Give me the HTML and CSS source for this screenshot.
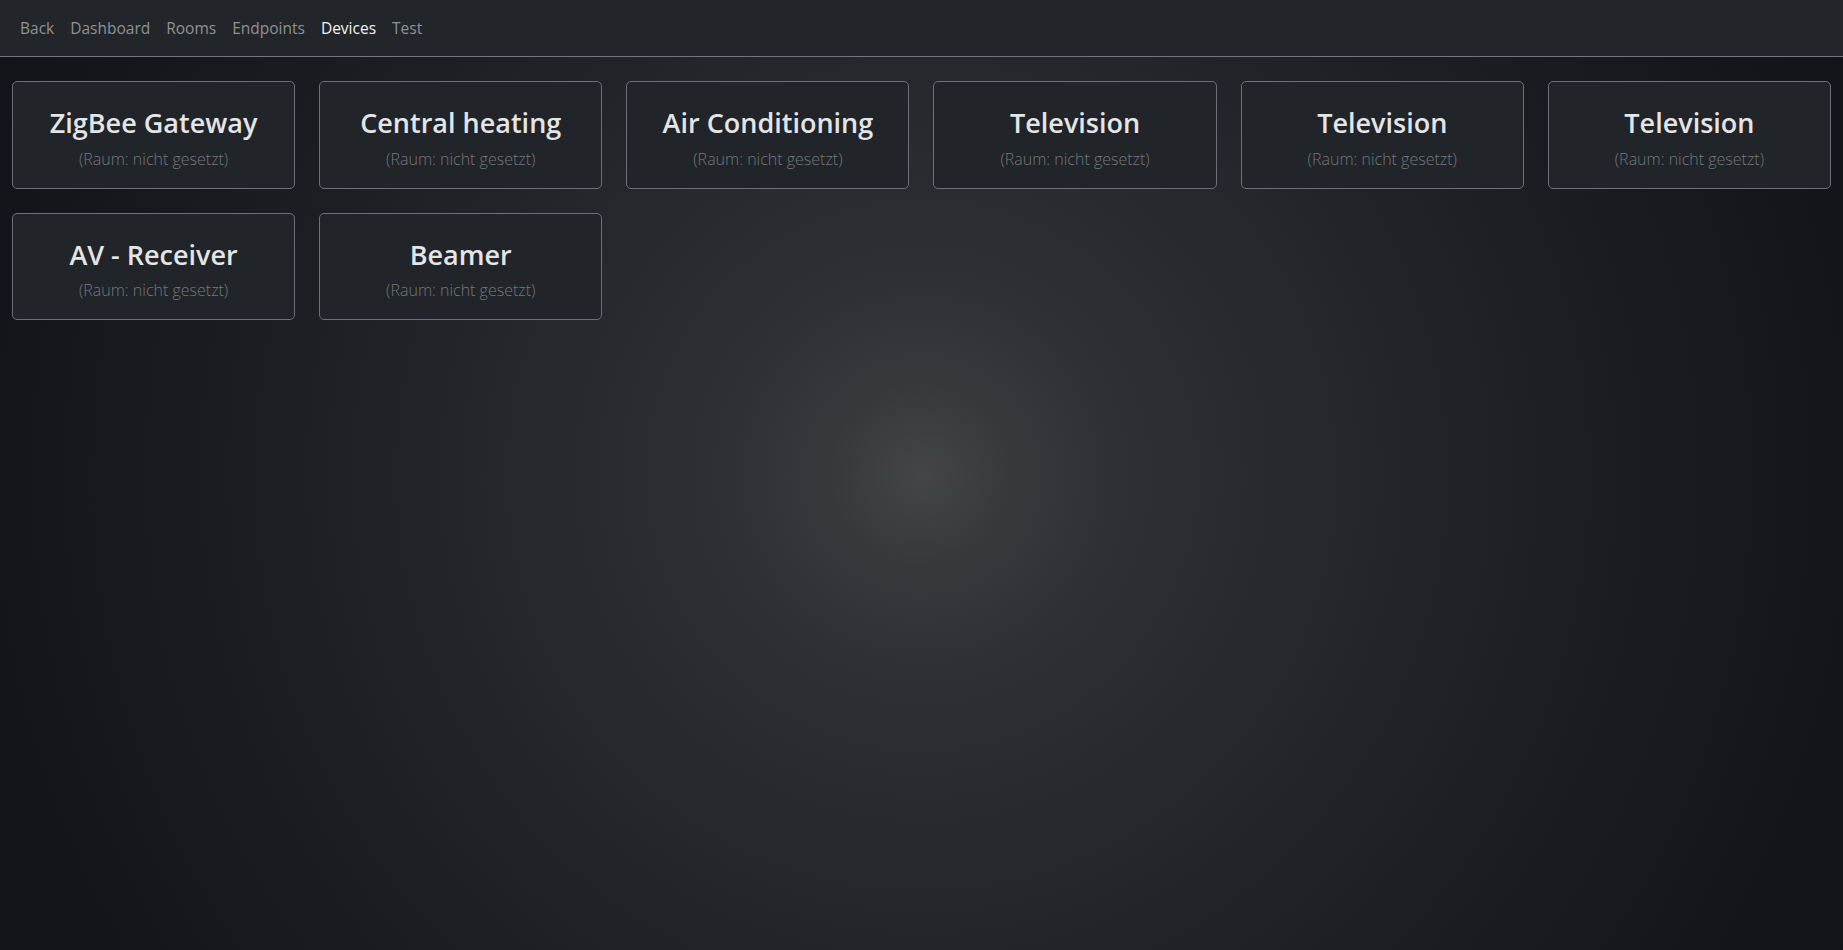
FILE: index.html
```html
<!DOCTYPE html>
<html lang="de">
<head>
<meta charset="utf-8">
<title>Devices</title>
<link rel="stylesheet" href="styles.css">
</head>
<body>
<nav class="navbar">
  <a class="nav-link" href="#">Back</a>
  <a class="nav-link" href="#">Dashboard</a>
  <a class="nav-link" href="#">Rooms</a>
  <a class="nav-link" href="#">Endpoints</a>
  <a class="nav-link active" href="#">Devices</a>
  <a class="nav-link" href="#">Test</a>
</nav>
<main class="devices">
  <div class="card"><h3 class="card-title">ZigBee Gateway</h3><p class="card-room">(Raum: nicht gesetzt)</p></div>
  <div class="card"><h3 class="card-title">Central heating</h3><p class="card-room">(Raum: nicht gesetzt)</p></div>
  <div class="card"><h3 class="card-title">Air Conditioning</h3><p class="card-room">(Raum: nicht gesetzt)</p></div>
  <div class="card"><h3 class="card-title">Television</h3><p class="card-room">(Raum: nicht gesetzt)</p></div>
  <div class="card"><h3 class="card-title">Television</h3><p class="card-room">(Raum: nicht gesetzt)</p></div>
  <div class="card"><h3 class="card-title">Television</h3><p class="card-room">(Raum: nicht gesetzt)</p></div>
  <div class="card"><h3 class="card-title">AV - Receiver</h3><p class="card-room">(Raum: nicht gesetzt)</p></div>
  <div class="card"><h3 class="card-title">Beamer</h3><p class="card-room">(Raum: nicht gesetzt)</p></div>
</main>
</body>
</html>
```
FILE: styles.css
```css
html {
  height: 100%;
  background: #111418;
}
body {
  margin: 0;
  min-height: 100%;
  font-family: "Open Sans", "Noto Sans", sans-serif;
  color: #dee2e6;
  background: radial-gradient(circle farthest-corner at 50% 50%,
    #434548 0%,
    #36393c 9%,
    #2c3034 20%,
    #25292d 38%,
    #1c2024 60%,
    #14171b 84%,
    #101317 100%);
  background-attachment: fixed;
}
.navbar {
  display: flex;
  align-items: center;
  height: 57px;
  padding: 0 12px;
  box-sizing: border-box;
  background: #222529;
  border-bottom: 1px solid #72777d;
}
.nav-link {
  padding: 8px 8px;
  font-size: 15.5px;
  line-height: 24px;
  color: #8f9296;
  text-decoration: none;
}
.nav-link.active {
  color: #f2f3f4;
}
.devices {
  display: grid;
  grid-template-columns: repeat(6, 1fr);
  gap: 24px;
  padding: 24px 12px;
}
.card {
  background: #212428;
  border: 1px solid #6c7177;
  border-radius: 5px;
  padding: 24px 16px 17px;
  text-align: center;
}
.card-title {
  margin: 0 0 7px;
  font-size: 27px;
  font-weight: 600;
  line-height: 33.6px;
  color: #e4e5e6;
}
.card-room {
  margin: 0;
  font-size: 16px;
  font-weight: 300;
  line-height: 24px;
  color: #73787d;
}
```
